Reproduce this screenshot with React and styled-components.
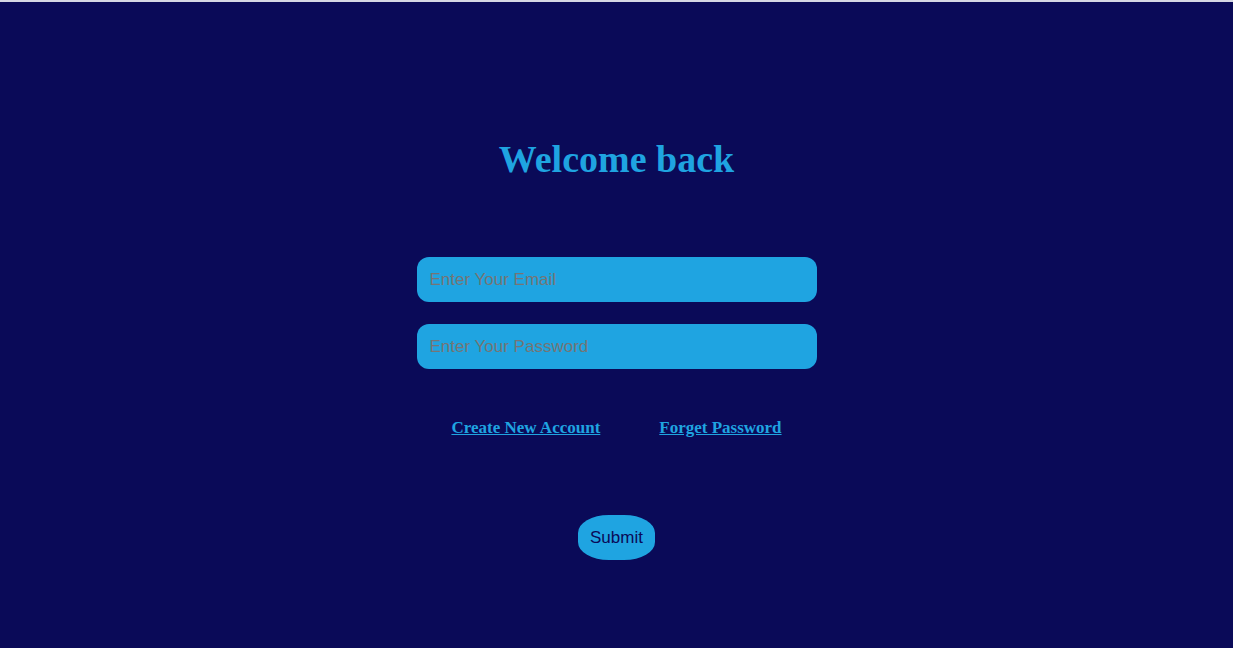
import React from "react";
import styled, { createGlobalStyle } from "styled-components";

const GlobalStyle = createGlobalStyle`
  * { box-sizing: border-box; }
  body {
    margin: 0;
    background: #0a0a58;
    font-family: "Liberation Serif", "Times New Roman", serif;
  }
`;

const Page = styled.main`
  min-height: 100vh;
  border-top: 2px solid #d5d7e4;
  background: #0a0a58;
  color: #1fa4e1;
`;

const Form = styled.form`
  display: flex;
  flex-direction: column;
  align-items: center;
  padding: 135px 16px 88px;
`;

const Title = styled.h1`
  margin: 0 0 76px;
  font-size: 38px;
  line-height: 44px;
`;

const Fields = styled.div`
  display: flex;
  flex-direction: column;
  gap: 22px;
  width: 100%;
  max-width: 400px;
`;

const Field = styled.input`
  width: 100%;
  height: 45px;
  padding: 0 13px;
  border: none;
  border-radius: 12px;
  background: #1fa4e1;
  color: #0a0a58;
  font-family: "Liberation Sans", Arial, sans-serif;
  font-size: 17px;

  &::placeholder {
    color: #757575;
    opacity: 1;
  }
`;

const Links = styled.nav`
  display: flex;
  flex-wrap: wrap;
  justify-content: center;
  gap: 16px 59px;
  margin: 48px 0 77px;
`;

const TextLink = styled.a`
  color: #1fa4e1;
  font-size: 17px;
  font-weight: bold;
  line-height: 21px;
`;

const SubmitButton = styled.button`
  height: 45px;
  padding: 0 12px;
  border: none;
  border-radius: 40%;
  background: #1fa4e1;
  color: #0a0a58;
  font-family: "Liberation Sans", Arial, sans-serif;
  font-size: 17px;
  cursor: pointer;
`;

export default function App() {
  return (
    <>
      <GlobalStyle />
      <Page>
        <Form onSubmit={(event) => event.preventDefault()}>
          <Title>Welcome back</Title>
          <Fields>
            <Field type="email" placeholder="Enter Your Email" aria-label="Email" />
            <Field type="password" placeholder="Enter Your Password" aria-label="Password" />
          </Fields>
          <Links>
            <TextLink href="#create">Create New Account</TextLink>
            <TextLink href="#forget">Forget Password</TextLink>
          </Links>
          <SubmitButton type="submit">Submit</SubmitButton>
        </Form>
      </Page>
    </>
  );
}
